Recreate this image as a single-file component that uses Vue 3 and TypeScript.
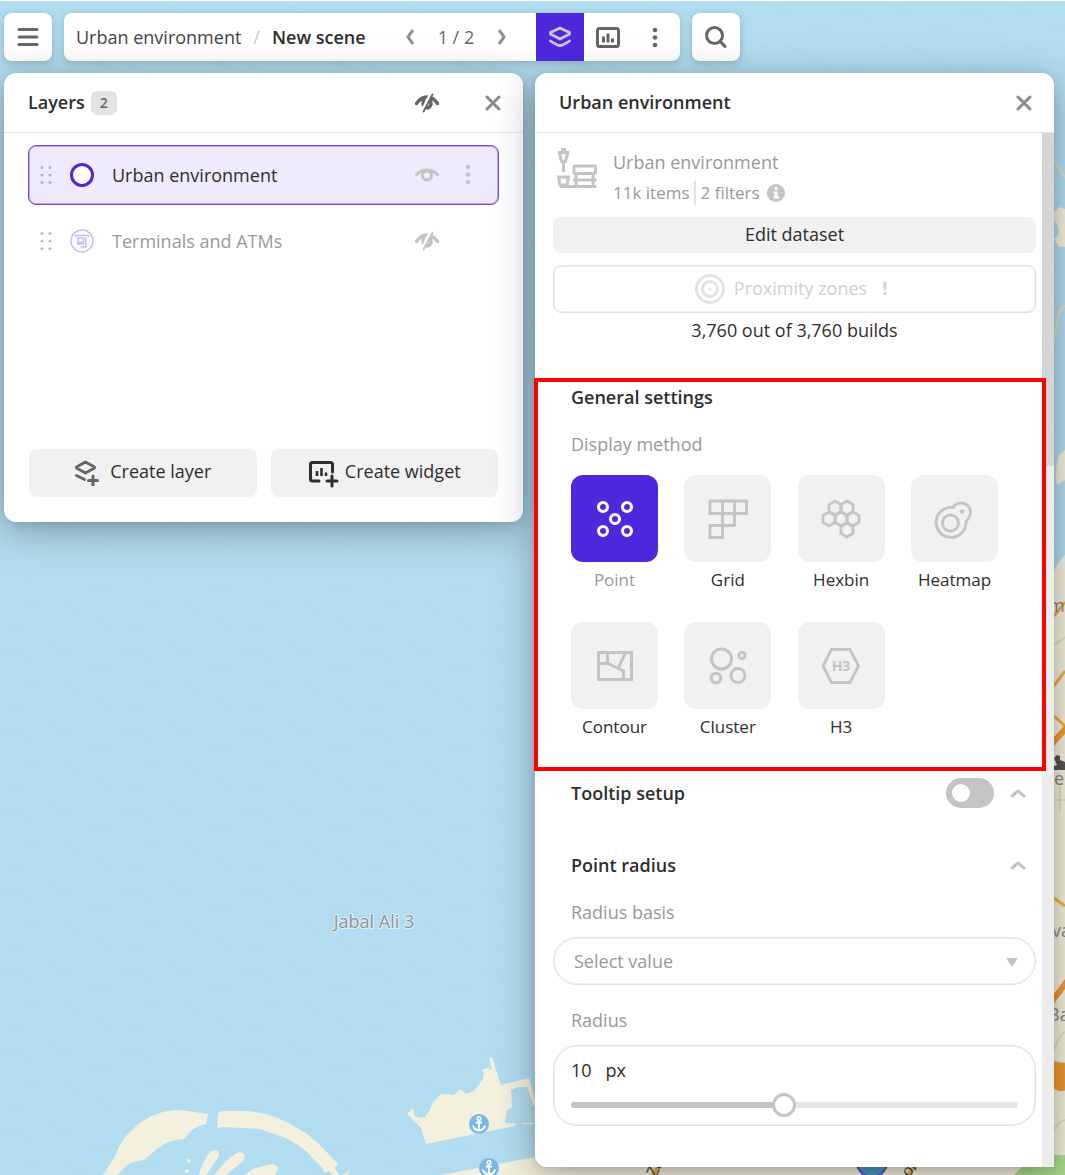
<script setup lang="ts">
import { ref, computed } from 'vue'

interface Method {
  id: string
  label: string
}

const methods: Method[] = [
  { id: 'point', label: 'Point' },
  { id: 'grid', label: 'Grid' },
  { id: 'hexbin', label: 'Hexbin' },
  { id: 'heatmap', label: 'Heatmap' },
  { id: 'contour', label: 'Contour' },
  { id: 'cluster', label: 'Cluster' },
  { id: 'h3', label: 'H3' },
]

const activeMethod = ref('point')
const tooltipOn = ref(false)
const basis = ref('')
const radius = ref(10)
const maxRadius = 21
const fill = computed(() => `${(radius.value / maxRadius) * 100}%`)

const hexCells = [
  [14, 8],
  [26, 8],
  [8, 19],
  [20, 19],
  [32, 19],
  [26, 30],
]
const hexPath = (x: number, y: number) =>
  `M${x} ${y - 7}l6 3.5v7l-6 3.5l-6 -3.5v-7z`
</script>

<template>
  <div class="app">
    <svg class="map" viewBox="0 1 1065 1174" preserveAspectRatio="xMinYMin slice" aria-hidden="true">
      <defs>
        <pattern id="waves" width="120" height="80" patternUnits="userSpaceOnUse">
          <path
            d="M4 12q14 2 26 8M50 6q12 4 24 5M86 24q14 2 26 7M20 40q12 1 24 8M62 46q14 3 22 8M6 66q12 1 22 6M94 62q10 2 20 7"
            fill="none"
            stroke="#a9d9ee"
            stroke-width="2"
            opacity=".5"
          />
        </pattern>
      </defs>
      <rect width="1065" height="1175" fill="#b2ddf0" />
      <rect width="1065" height="1175" fill="url(#waves)" />
      <g fill="#f3f0de">
        <path
          d="M103 1175L114 1158L119 1147Q124 1137 133 1129Q141 1121 152 1116Q164 1110 179 1110Q195 1112 208 1114L206 1124Q201 1125 193 1129L184 1139Q176 1139 169 1142Q162 1145 157 1149L144 1160Q133 1161 127 1165L117 1175z"
        />
        <path
          d="M217 1128L218 1113L222 1111H246Q262 1112 275 1117Q286 1121 296 1127Q308 1134 317 1142L338 1164L335 1168L339 1175H332L329 1171L324 1173L323 1169L306 1151Q297 1144 286 1138L260 1129L224 1127zM342 1175L351 1170L347 1175z"
        />
        <path
          d="M199 1175Q202 1162 210 1152Q214 1149 218 1151Q220 1154 218 1158L206 1175zM214 1175Q224 1162 236 1153Q241 1151 244 1154Q246 1158 242 1162L226 1175zM244 1175L255 1168L272 1164Q278 1165 278 1169L275 1175z"
        />
        <circle cx="189" cy="1161" r="2" />
        <circle cx="187" cy="1171" r="2" />
        <path
          d="M407 1114L413 1108L415 1116L420 1118L425 1117L430 1110L433 1102L441 1094L454 1095L461 1089L466 1094L474 1091L483 1079L484 1073L482 1070L488 1068L492 1070L489 1058L492 1057L501 1085L529 1078L536 1103L534 1107L527 1087L518 1087L511 1090L512 1108L507 1110L505 1123H516L515 1126L426 1144L421 1128zM522 1123H540V1124H522z"
        />
        <path d="M441 1175L535 1157V1175z" />
        <path d="M535 1050l1065 0v150h-1065v-43h20z" />
        <path d="M1065 480l-8 5q-3-14 2-30l6-5zM1054 212l5-5l6 2v38h-6l-5-8q8-6 3-14l-3-5z" />
        <path d="M1065 555q-10 8-20 40v580h20z" />
      </g>
      <g fill="none" stroke="#e3ddc9" stroke-width="2">
        <path d="M1054 160l6 9l5 9M1065 305q-8 6-8 22l-4 16M1054 645l11-8M1054 800h11M1060 782v30" />
        <path d="M1054 1050q6-16 11-18M1054 1130q4-8 11-10" />
      </g>
      <g fill="none" stroke="#f2b040">
        <path d="M1054 616l11-14M1054 686l11-15M1054 716l11 10M1054 898l11 8" stroke-width="3" />
        <path d="M1050 746l18-20M1050 1004l18-24" stroke="#ee9a37" stroke-width="6" />
      </g>
      <path d="M1050 1060q14 4 20 2v26q-12 8-20-4z" fill="#ee9a37" />
      <path d="M1014 1175l20-20h31v20z" fill="#a9d88c" />
      <path d="M1054 758l3-3l3 1v4l5 2v8h-11v-4l3-1z" fill="#555" />
      <text class="sea-text" x="374" y="928" text-anchor="middle">Jabal Ali 3</text>
      <g class="land-text">
        <text x="1048" y="612">m</text>
        <text x="1054" y="785">e</text>
        <text x="1052" y="937">va</text>
        <text x="1048" y="1021">Ba</text>
      </g>
      <path d="M652 1175l14-16M900 1182l24-24" stroke="#f2b040" stroke-width="4" />
      <g class="road-text">
        <text x="656" y="1178" transform="rotate(-65 656 1178)">Za</text>
        <text x="908" y="1178" transform="rotate(-45 908 1178)">on</text>
      </g>
      <circle cx="872" cy="1162" r="15" fill="#459cc0" stroke="#6a3fd8" stroke-width="2" />
      <g v-for="p in [[479, 1124], [489, 1168]]" :key="p[1]" :transform="`translate(${p[0]} ${p[1]})`">
        <circle r="10" fill="#7db6e8" />
        <path
          d="M0 -3.500V6M-3 -1.500H3M-6 1.500Q-5 6 0 6.500Q5 6 6 1.500"
          fill="none"
          stroke="#fff"
          stroke-width="1.800"
        />
        <circle cy="-5.500" r="1.800" fill="none" stroke="#fff" stroke-width="1.400" />
      </g>
    </svg>

    <header class="bar">
      <button class="card square" aria-label="Menu">
        <svg width="24" height="24" fill="none" stroke="#666" stroke-width="3" stroke-linecap="round">
          <path d="M3 4.500h18M3 12h18M3 19.500h18" />
        </svg>
      </button>
      <div class="card toolbar">
        <nav class="crumbs">
          <a href="#">Urban environment</a>
          <span class="slash">/</span>
          <strong>New scene</strong>
        </nav>
        <div class="pager">
          <button aria-label="Previous scene">
            <svg width="16" height="24" fill="none" stroke="#8c8c8c" stroke-width="3"><path d="M11 5L6 12l5 7" /></svg>
          </button>
          <span>1 / 2</span>
          <button aria-label="Next scene">
            <svg width="16" height="24" fill="none" stroke="#8c8c8c" stroke-width="3"><path d="M5 5l5 7l-5 7" /></svg>
          </button>
        </div>
        <button class="tool on" aria-label="Layers">
          <svg width="24" height="24" fill="none" stroke="#cfc3f8" stroke-width="2.800" stroke-linecap="round" stroke-linejoin="round">
            <path d="M12 3l9.500 4.500v1.500L12 14L2.500 9V7.500zM2.500 16q2 1.500 7 4q2.500 1 5 0q5-2.500 7-4" />
          </svg>
        </button>
        <button class="tool" aria-label="Widgets">
          <svg width="24" height="24" fill="none" stroke="#666" stroke-width="3">
            <rect x="1.500" y="3.500" width="21" height="18" rx="2" />
            <path d="M7.500 11.500v6M12 8.500v9M16.500 13.500v4" />
          </svg>
        </button>
        <button class="tool" aria-label="More">
          <svg width="24" height="24" fill="#666">
            <circle cx="11" cy="5" r="2.300" /><circle cx="11" cy="12.500" r="2.300" /><circle cx="11" cy="20" r="2.300" />
          </svg>
        </button>
      </div>
      <button class="card square" aria-label="Search">
        <svg width="24" height="24" fill="none" stroke="#666" stroke-width="3" stroke-linecap="round">
          <circle cx="10.500" cy="10.500" r="8" /><path d="M16.500 16.500l4.500 5" />
        </svg>
      </button>
    </header>

    <main class="panels">
      <section class="panel layers">
        <div class="head">
          <h2>Layers</h2>
          <span class="count">2</span>
          <span class="spacer"></span>
          <button class="eye" aria-label="Hide all layers">
            <svg width="24" height="20" fill="none" stroke="#666" stroke-width="3.400" stroke-linecap="round">
              <path d="M1.500 10.500Q6 4 12 4Q18 4 22.500 10.500" />
              <path d="M9 6Q7 11 9.500 14M14.500 6q3 5 0 8l-2 1" />
              <path d="M15.500 1L7 18.500" stroke="#fff" stroke-width="3" />
              <path d="M17.500 1.500L8.500 18.500" stroke-width="1.800" />
            </svg>
          </button>
          <button class="close" aria-label="Close layers">
            <svg width="16" height="16" fill="none" stroke="#8c8c8c" stroke-width="3" stroke-linecap="round">
              <path d="M2 2l12 12M14 2L2 14" />
            </svg>
          </button>
        </div>
        <ul class="list">
          <li class="row selected">
            <svg class="grip" width="12" height="18" fill="#b3b0bb">
              <circle v-for="i in 6" :key="i" :cx="i % 2 ? 2 : 10" :cy="Math.floor((i - 1) / 2) * 7.5 + 1.5" r="1.500" />
            </svg>
            <svg width="24" height="24"><circle cx="12" cy="12" r="10.500" fill="#fff" stroke="#4f28de" stroke-width="3" /></svg>
            <span class="name">Urban environment</span>
            <button class="eye" aria-label="Hide layer">
              <svg width="24" height="20" fill="none" stroke="#c4c4c4" stroke-width="3" stroke-linecap="round">
                <path d="M1.500 9.500Q6 5 12 5Q18 5 22.500 9.500" /><circle cx="12" cy="10.500" r="4.500" />
              </svg>
            </button>
            <button class="more" aria-label="Layer menu">
              <svg width="6" height="20" fill="#c4c4c4">
                <circle cx="3" cy="2" r="2.300" /><circle cx="3" cy="9.500" r="2.300" /><circle cx="3" cy="17" r="2.300" />
              </svg>
            </button>
          </li>
          <li class="row off">
            <svg class="grip" width="12" height="18" fill="#c0c0c0">
              <circle v-for="i in 6" :key="i" :cx="i % 2 ? 2 : 10" :cy="Math.floor((i - 1) / 2) * 7.5 + 1.5" r="1.500" />
            </svg>
            <svg width="24" height="24" fill="none" stroke="#c8bdf6">
              <circle cx="12" cy="12" r="11" stroke-width="1.500" />
              <path d="M5.500 8V6.500H18.500V8" stroke-width="1.300" />
              <path d="M8 9H13.500V15H8zM7.500 13.500H13M10.500 17.800H15.800V8.500" stroke-width="1.700" />
            </svg>
            <span class="name">Terminals and ATMs</span>
            <button class="eye" aria-label="Show layer">
              <svg width="24" height="20" fill="none" stroke="#c4c4c4" stroke-width="3.400" stroke-linecap="round">
                <path d="M1.500 10.500Q6 4 12 4Q18 4 22.500 10.500" />
                <path d="M9 6Q7 11 9.500 14M14.500 6q3 5 0 8l-2 1" />
                <path d="M15.500 1L7 18.500" stroke="#fff" stroke-width="3" />
                <path d="M17.500 1.500L8.500 18.500" stroke-width="1.800" />
              </svg>
            </button>
            <span class="more"></span>
          </li>
        </ul>
        <div class="foot">
          <button class="soft">
            <svg width="26" height="26" fill="none" stroke="#666" stroke-width="2.800" stroke-linecap="round" stroke-linejoin="round">
              <path d="M11.500 2l9 5v1l-9 5l-9-5V7zM2.500 15.500l8 4" />
              <path d="M19 16v9M14.500 20.500h9" stroke-width="3" />
            </svg>
            <span>Create layer</span>
          </button>
          <button class="soft">
            <svg class="widget-icon" width="27" height="28" fill="none" stroke="#2e2e2e" stroke-width="3" stroke-linecap="round">
              <path d="M11 22H4.500q-2 0-2-2V5.500q0-2 2-2h18q2 0 2 2V13" />
              <path d="M9 12v5M13.500 9v8M18 13.500v3.500" stroke-width="2.600" stroke-linecap="butt" />
              <path d="M24 17v10M19 22h10" />
            </svg>
            <span>Create widget</span>
          </button>
        </div>
      </section>

      <section class="panel settings">
        <div class="head">
          <h2>Urban environment</h2>
          <span class="spacer"></span>
          <button class="close" aria-label="Close settings">
            <svg width="16" height="16" fill="none" stroke="#8c8c8c" stroke-width="3" stroke-linecap="round">
              <path d="M2 2l12 12M14 2L2 14" />
            </svg>
          </button>
        </div>
        <div class="body">
          <div class="content">
            <div class="dataset">
              <svg width="42" height="42" fill="none" stroke="#c4c4c4" stroke-width="3">
                <path d="M5 2.500h5M2 5.500h11M3.500 6l2 8.500h4l2-8.500M7.500 15v10M2.500 30h10l-1.500 8H4z" />
                <rect x="18" y="19" width="21.500" height="7.500" rx="1" />
                <path d="M4 39.500h36.500M17 33h23.500M20 27v12M37 27v12" />
              </svg>
              <div class="dataset-text">
                <div>Urban environment</div>
                <div class="meta">
                  <span>11k items</span><i></i><span>2 filters</span>
                  <svg width="18" height="18">
                    <circle cx="9" cy="9" r="9" fill="#c4c4c4" />
                    <path d="M7.500 3h3v3h-3zM6.500 7.500h4v5H12v2H6.500v-2h1v-3h-1z" fill="#fff" />
                  </svg>
                </div>
              </div>
            </div>
            <button class="soft edit">Edit dataset</button>
            <button class="proximity" disabled>
              <svg width="30" height="30" fill="none" stroke="#e3e3e3" stroke-width="3">
                <circle cx="15" cy="15" r="13.500" /><circle cx="15" cy="15" r="7.500" />
                <circle cx="15" cy="15" r="1.500" fill="#e3e3e3" stroke="none" />
              </svg>
              <span>Proximity zones</span>
              <b>!</b>
            </button>
            <p class="builds">3,760 out of 3,760 builds</p>

            <section class="general">
              <h3>General settings</h3>
              <p class="label">Display method</p>
              <div class="methods">
                <button
                  v-for="m in methods"
                  :key="m.id"
                  class="method"
                  :class="{ active: m.id === activeMethod }"
                  :aria-pressed="m.id === activeMethod"
                  @click="activeMethod = m.id"
                >
                  <span class="tile">
                    <svg width="40" height="40" fill="none" stroke="currentColor" stroke-width="3">
                      <g v-if="m.id === 'point'">
                        <circle cx="8" cy="8" r="4.500" /><circle cx="32" cy="8" r="4.500" /><circle cx="20" cy="20" r="4.500" />
                        <circle cx="8" cy="32" r="4.500" /><circle cx="32" cy="32" r="4.500" />
                      </g>
                      <path
                        v-else-if="m.id === 'grid'"
                        stroke-width="2.800"
                        d="M2 2H38.500V14.500H2zM14.500 2V38.500H2V26.500H26.500V2M2 26.500V38.500"
                      />
                      <g v-else-if="m.id === 'hexbin'" stroke-width="2.800">
                        <path v-for="c in hexCells" :key="c.join()" :d="hexPath(c[0], c[1] + 1)" />
                      </g>
                      <g v-else-if="m.id === 'heatmap'" stroke-width="2.900">
                        <circle cx="16.500" cy="24" r="8" />
                        <path d="M19 8.500A15 15 0 1 0 32 24Q32 22 34 20A9.500 9.500 0 1 0 19 8.500z" />
                        <circle cx="28" cy="12.500" r="2.200" fill="currentColor" stroke="none" />
                      </g>
                      <path
                        v-else-if="m.id === 'contour'"
                        stroke-width="3"
                        d="M3.500 6.500H36.500V33.500H3.500zM3.500 17.500H13L28.500 25V33.500M12.500 6.500V17.500M30.500 6.500L23.500 21.500"
                      />
                      <g v-else-if="m.id === 'cluster'" stroke-width="3">
                        <circle cx="13.500" cy="13" r="10" /><circle cx="34" cy="9.500" r="3.200" />
                        <circle cx="8" cy="32" r="4.800" /><circle cx="30" cy="29.500" r="7" />
                      </g>
                      <g v-else>
                        <path d="M10.500 3.500H29L37.500 20L29 36.500H10.500L2 20z" stroke-width="2.800" />
                        <text class="h3-text" x="20" y="25" text-anchor="middle">H3</text>
                      </g>
                    </svg>
                  </span>
                  <span class="caption">{{ m.label }}</span>
                </button>
              </div>
              <div class="highlight"></div>
            </section>

            <section class="group tooltip-group">
              <h3 id="tooltip-title">Tooltip setup</h3>
              <input v-model="tooltipOn" class="switch" type="checkbox" role="switch" aria-labelledby="tooltip-title" />
              <button class="fold" aria-label="Collapse tooltip setup">
                <svg width="16" height="10" fill="none" stroke="#c4c4c4" stroke-width="3" stroke-linecap="round"><path d="M2 8l6-5l6 5" /></svg>
              </button>
            </section>
            <section class="group">
              <h3>Point radius</h3>
              <button class="fold" aria-label="Collapse point radius">
                <svg width="16" height="10" fill="none" stroke="#c4c4c4" stroke-width="3" stroke-linecap="round"><path d="M2 8l6-5l6 5" /></svg>
              </button>
            </section>
            <label class="label indent" for="basis">Radius basis</label>
            <div class="select">
              <select id="basis" v-model="basis">
                <option value="">Select value</option>
              </select>
              <svg width="12" height="10"><path d="M0 1h12L6 10z" fill="#c4c4c4" /></svg>
            </div>
            <label class="label indent radius-label" for="radius">Radius</label>
            <div class="slider">
              <div class="value"><span>{{ radius }}</span><span>px</span></div>
              <div class="range">
                <div class="track"><div class="filled" :style="{ width: fill }"></div></div>
                <input id="radius" v-model.number="radius" type="range" min="0" :max="maxRadius" />
              </div>
            </div>
          </div>
          <div class="scroll"><div class="thumb"></div></div>
        </div>
      </section>
    </main>
  </div>
</template>

<style>
body {
  margin: 0;
}
</style>

<style scoped>
.app,
.app * {
  box-sizing: border-box;
}
.app {
  position: relative;
  overflow: hidden;
  min-height: 100vh;
  padding: 12px 11px 8px 4px;
  border-top: 1px solid #fff;
  background: #b2ddf0;
  color: #2e2e2e;
  font: 18px/24px 'Open Sans', 'Noto Sans', sans-serif;
}
.map {
  position: absolute;
  inset: 0;
  width: 100%;
  height: 100%;
}
.sea-text {
  font-size: 18px;
  fill: #8f9498;
  paint-order: stroke;
  stroke: #e0eff5;
  stroke-width: 2px;
}
.land-text {
  font-size: 18px;
  fill: #8a8883;
}
.road-text {
  font-size: 16px;
  fill: #444;
}
button {
  display: flex;
  align-items: center;
  justify-content: center;
  padding: 0;
  border: 0;
  background: none;
  color: inherit;
  font: inherit;
  cursor: pointer;
}
h2,
h3,
p,
ul {
  margin: 0;
  padding: 0;
  font-size: 18px;
}
h2,
h3,
strong {
  font-weight: 600;
}
svg {
  flex: none;
}
.bar {
  position: relative;
  display: flex;
  gap: 12px;
}
.card {
  height: 48px;
  border-radius: 8px;
  background: #fff;
  box-shadow: 0 2px 8px rgba(0, 0, 0, 0.2);
}
.square {
  width: 48px;
}
.toolbar {
  display: flex;
  align-items: center;
  overflow: hidden;
  padding-left: 12px;
}
.crumbs {
  display: flex;
  gap: 12px;
}
.crumbs a {
  color: #444;
  text-decoration: none;
}
.slash {
  color: #c8c8c8;
}
.pager {
  display: flex;
  align-items: center;
  gap: 20px;
  margin: 0 26px 0 36px;
  color: #666;
}
.tool {
  width: 48px;
  height: 48px;
}
.tool.on {
  background: #4f28de;
}
.panels {
  position: relative;
  display: flex;
  align-items: flex-start;
  gap: 12px;
  margin-top: 12px;
}
.panel {
  position: relative;
  flex: 1;
  min-width: 0;
  border-radius: 12px;
  background: #fff;
  box-shadow: 0 8px 40px rgba(0, 0, 0, 0.32), 0 2px 8px rgba(0, 0, 0, 0.1);
}
.settings {
  border-bottom-right-radius: 0;
}
.head {
  display: flex;
  align-items: center;
  height: 60px;
  padding: 0 22px 0 24px;
  border-bottom: 1px solid #e5e5e5;
}
.head h2 {
  margin-bottom: 2px;
}
.count {
  width: 26px;
  height: 24px;
  margin-left: 6px;
  border-radius: 6px;
  background: #e3e3e3;
  color: #666;
  font-size: 14px;
  font-weight: 600;
  text-align: center;
}
.spacer {
  flex: 1;
}
.layers .head .eye {
  margin-right: 46px;
}
.list {
  display: flex;
  flex-direction: column;
  gap: 6px;
  min-height: 316px;
  padding: 12px 24px;
  list-style: none;
}
.row {
  display: flex;
  align-items: center;
  height: 60px;
  padding: 0 26px 0 11px;
  border: 1px solid transparent;
  border-radius: 8px;
}
.selected {
  border-color: #6f49e4;
  background: #f0ebfc;
  box-shadow: inset 0 0 0 1px #b9a7f2;
}
.grip {
  margin-right: 18px;
}
.name {
  flex: 1;
  margin-left: 18px;
}
.off .name {
  color: #999;
}
.more {
  width: 8px;
  margin-left: 25px;
}
.foot {
  display: flex;
  gap: 14px;
  padding: 0 25px 25px;
}
.foot span {
  margin-bottom: 4px;
}
.widget-icon {
  overflow: visible;
}
.soft {
  flex: 1;
  gap: 10px;
  height: 48px;
  border-radius: 8px;
  background: #f1f1f1;
}
.body {
  display: flex;
}
.content {
  flex: 1;
  min-width: 0;
  padding: 14px 6px 41px 18px;
}
.dataset {
  display: flex;
  gap: 15px;
  padding-left: 3px;
  color: #999;
}
.dataset-text {
  padding-top: 3px;
}
.meta {
  display: flex;
  align-items: center;
  margin-top: 7px;
  font-size: 17px;
}
.meta i {
  width: 2px;
  height: 24px;
  margin: 0 5px 0 4px;
  background: #e3e3e3;
}
.meta svg {
  margin-left: 7px;
}
.edit {
  width: 100%;
  height: 36px;
  margin-top: 12px;
  padding-bottom: 2px;
}
.proximity {
  gap: 9px;
  width: 100%;
  height: 48px;
  margin-top: 12px;
  border: 1px solid #e1e1e1;
  border-radius: 8px;
  box-shadow: inset 0 0 0 1px #f0f0f0;
  color: #d0d0d0;
}
.proximity span {
  margin-bottom: 2px;
}
.proximity b {
  width: 12px;
  margin: 0 0 2px 6px;
  text-align: left;
}
.builds {
  margin-top: 5px;
  text-align: center;
}
.general {
  position: relative;
  margin-top: 36px;
  padding: 7px 38px 32px 18px;
}
.highlight {
  position: absolute;
  inset: 0 -10px 0 -19px;
  border: 4px solid #f00;
  pointer-events: none;
}
.label {
  color: #999;
}
.general .label {
  margin: 23px 0 19px;
}
.methods {
  display: grid;
  grid-template-columns: repeat(4, 87px);
  justify-content: space-between;
  row-gap: 30px;
}
.method {
  flex-direction: column;
  gap: 6px;
}
.tile {
  display: flex;
  align-items: center;
  justify-content: center;
  width: 87px;
  height: 87px;
  border-radius: 12px;
  background: #f1f1f1;
  color: #c4c4c4;
}
.caption {
  font-size: 17px;
}
.active .tile {
  background: #4f28de;
  color: #fff;
}
.active .caption {
  color: #999;
}
.h3-text {
  fill: currentColor;
  stroke: none;
  font-size: 14px;
  font-weight: 700;
}
.group {
  display: flex;
  align-items: center;
  height: 71px;
  padding: 0 10px 0 18px;
}
.tooltip-group {
  height: 44px;
  margin-bottom: 14px;
}
.group h3 {
  flex: 1;
}
.switch {
  appearance: none;
  width: 48px;
  height: 30px;
  margin: 0 16px 0 0;
  border-radius: 15px;
  background: #c4c4c4;
}
.switch::before {
  content: '';
  display: block;
  width: 18px;
  height: 18px;
  margin: 6px;
  border-radius: 50%;
  background: #fff;
}
.switch:checked {
  background: #4f28de;
}
.switch:checked::before {
  margin-left: 24px;
}
.indent {
  display: block;
  padding-left: 18px;
}
.select {
  position: relative;
  margin-top: 13px;
}
.select select {
  appearance: none;
  display: block;
  width: 100%;
  height: 48px;
  padding: 0 20px;
  border: 1px solid #e1e1e1;
  border-radius: 24px;
  background: #fff;
  box-shadow: inset 0 0 0 1px #f0f0f0;
  color: #999;
  font: inherit;
}
.select svg {
  position: absolute;
  top: 20px;
  right: 18px;
  pointer-events: none;
}
.radius-label {
  margin-top: 23px;
}
.slider {
  height: 81px;
  margin-top: 13px;
  padding: 12px 17px;
  border: 1px solid #e1e1e1;
  border-radius: 24px;
  box-shadow: inset 0 0 0 1px #f0f0f0;
}
.value {
  display: flex;
  gap: 14px;
}
.range {
  display: grid;
  align-items: center;
  margin-top: 11px;
}
.track,
.range input {
  grid-area: 1 / 1;
}
.track {
  height: 6px;
  border-radius: 3px;
  background: #e5e5e5;
}
.filled {
  height: 6px;
  border-radius: 3px;
  background: #c4c4c4;
}
.range input {
  appearance: none;
  width: 100%;
  height: 24px;
  margin: 0;
  background: none;
}
.range input::-webkit-slider-thumb {
  appearance: none;
  width: 24px;
  height: 24px;
  border: 3px solid #c4c4c4;
  border-radius: 50%;
  background: #fff;
}
.scroll {
  width: 12px;
  background: #ececec;
}
.thumb {
  height: 32.2%;
  background: #d5d5d5;
}
</style>
